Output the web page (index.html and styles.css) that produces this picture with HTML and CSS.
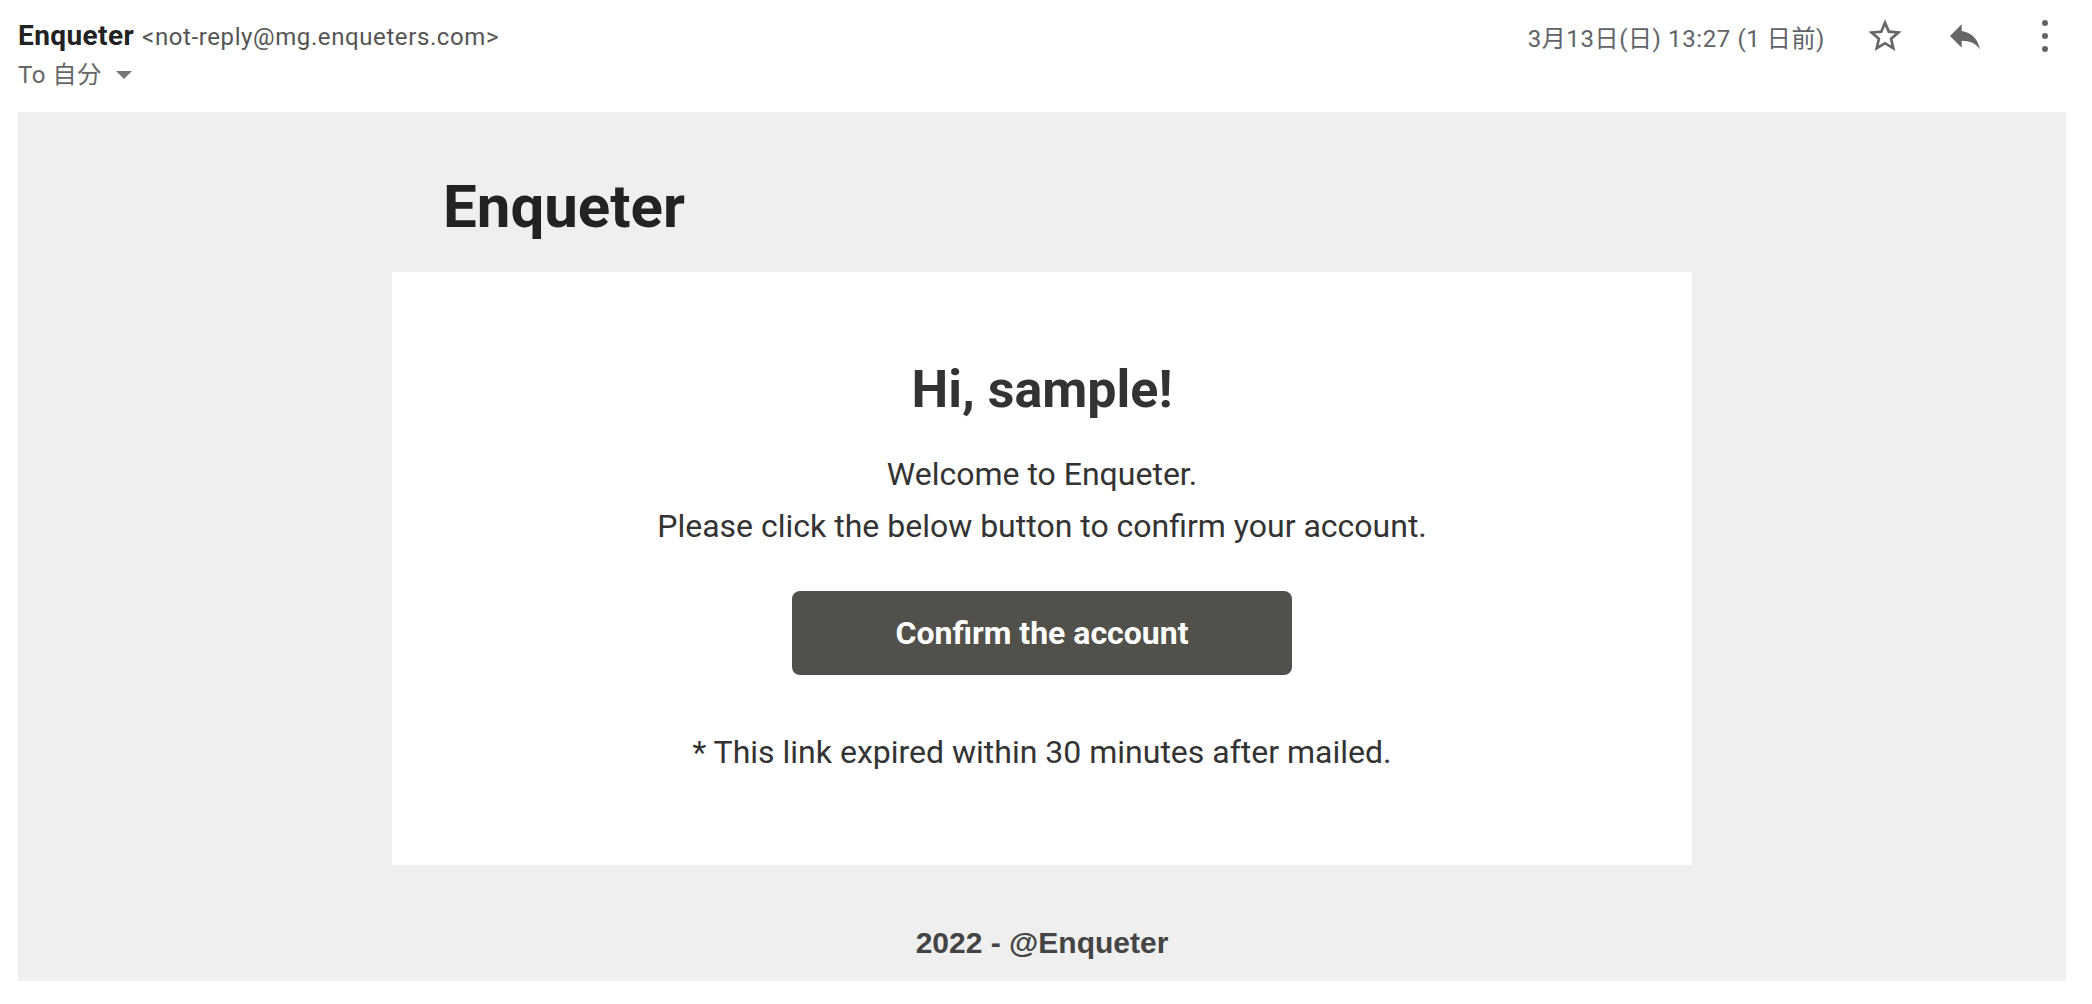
FILE: index.html
```html
<!DOCTYPE html>
<html lang="ja">
<head>
<meta charset="utf-8">
<title>Enqueter</title>
<link rel="stylesheet" href="styles.css">
</head>
<body>
<div class="mail">
  <header class="mail-head">
    <div class="meta">
      <div class="from"><span class="sender">Enqueter</span><span class="addr">&lt;not-reply@mg.enqueters.com&gt;</span></div>
      <div class="to">To 自分 <span class="caret"></span></div>
    </div>
    <div class="actions">
      <span class="date">3月13日(日) 13:27 (1 日前)</span>
      <span class="icon-btn">
        <svg viewBox="0 0 24 24" width="40" height="40"><path fill="#666" d="M22 9.24l-7.19-.62L12 2 9.19 8.63 2 9.24l5.46 4.73L5.82 21 12 17.27 18.18 21l-1.630-7.03L22 9.24zM12 15.4l-3.76 2.27 1-4.28-3.32-2.88 4.38-.38L12 6.1l1.71 4.04 4.38.38-3.32 2.88 1 4.280L12 15.4z"/></svg>
      </span>
      <span class="icon-btn">
        <svg viewBox="0 0 24 24" width="40" height="40"><path fill="#666" d="M10 9V5l-7 7 7 7v-4.1c5 0 8.5 1.6 11 5.1-1-5-4-10-11-11z"/></svg>
      </span>
      <span class="icon-btn">
        <svg viewBox="0 0 40 40" width="40" height="40"><circle cx="20" cy="7" r="3" fill="#666"/><circle cx="20" cy="20" r="3" fill="#666"/><circle cx="20" cy="33" r="3" fill="#666"/></svg>
      </span>
    </div>
  </header>

  <div class="mail-body">
    <div class="wrap">
      <h1 class="brand">Enqueter</h1>
      <div class="card">
        <h2 class="hello">Hi, sample!</h2>
        <p class="text">Welcome to Enqueter.<br>Please click the below button to confirm your account.</p>
        <a class="btn" href="#">Confirm the account</a>
        <p class="text note">* This link expired within 30 minutes after mailed.</p>
      </div>
      <p class="footer">2022 - @Enqueter</p>
    </div>
  </div>
</div>
</body>
</html>
```

FILE: styles.css
```css
* { box-sizing: border-box; }
html, body { margin: 0; padding: 0; background: #fff; }
body { font-family: Roboto, "Noto Sans CJK JP", sans-serif; }

.mail-head {
  display: flex;
  justify-content: space-between;
  align-items: flex-start;
  padding: 16px 7px 0 18px;
  height: 112px;
}
.from { height: 40px; line-height: 40px; white-space: nowrap; }
.sender { font-size: 28px; font-weight: 700; color: #222; letter-spacing: 0.4px; margin-right: 8px; }
.addr { font-size: 24px; color: #555; letter-spacing: 0.6px; }
.to {
  font-family: Roboto, "Noto Sans CJK JP", sans-serif;
  font-size: 24px; color: #666; line-height: 38px; letter-spacing: 0.6px;
  display: flex; align-items: center;
}
.caret {
  display: inline-block;
  width: 0; height: 0;
  margin-left: 14px;
  border-left: 8px solid transparent;
  border-right: 8px solid transparent;
  border-top: 8px solid #777;
}
.actions { display: flex; align-items: center; height: 40px; }
.date {
  font-family: Roboto, "Noto Sans CJK JP", sans-serif;
  font-size: 24px; color: #5f6368; margin-right: 20px; white-space: nowrap; letter-spacing: 0.6px;
}
.icon-btn { width: 80px; height: 40px; display: flex; justify-content: center; align-items: center; }
.icon-btn svg { display: block; }

.mail-body {
  background: #efefef;
  margin: 0 26px 0 18px;
  height: 869px;
  display: flex;
  justify-content: center;
}
.wrap { width: 1300px; padding-top: 59px; }
.brand {
  margin: 0 0 29px; padding-left: 51px;
  font-size: 60px; line-height: 72px; font-weight: 700; color: #222;
}
.card {
  background: #fff;
  height: 593px;
  padding-top: 86px;
  display: flex; flex-direction: column; align-items: center;
  text-align: center;
}
.hello { margin: 0; font-size: 52px; line-height: 64px; font-weight: 700; color: #333; }
.text { margin: 26px 0 0; font-size: 32px; line-height: 52px; color: #333; }
.btn {
  display: flex; align-items: center; justify-content: center;
  margin-top: 39px;
  width: 500px; height: 84px;
  background: #52504b; border-radius: 8px;
  color: #fff; font-size: 32px; font-weight: 700; text-decoration: none;
}
.note { margin-top: 51px; }
.footer {
  margin: 58px 0 0; text-align: center;
  font-family: "Liberation Sans", Arial, sans-serif;
  font-size: 30px; line-height: 40px; font-weight: 700; color: #444;
}
```
